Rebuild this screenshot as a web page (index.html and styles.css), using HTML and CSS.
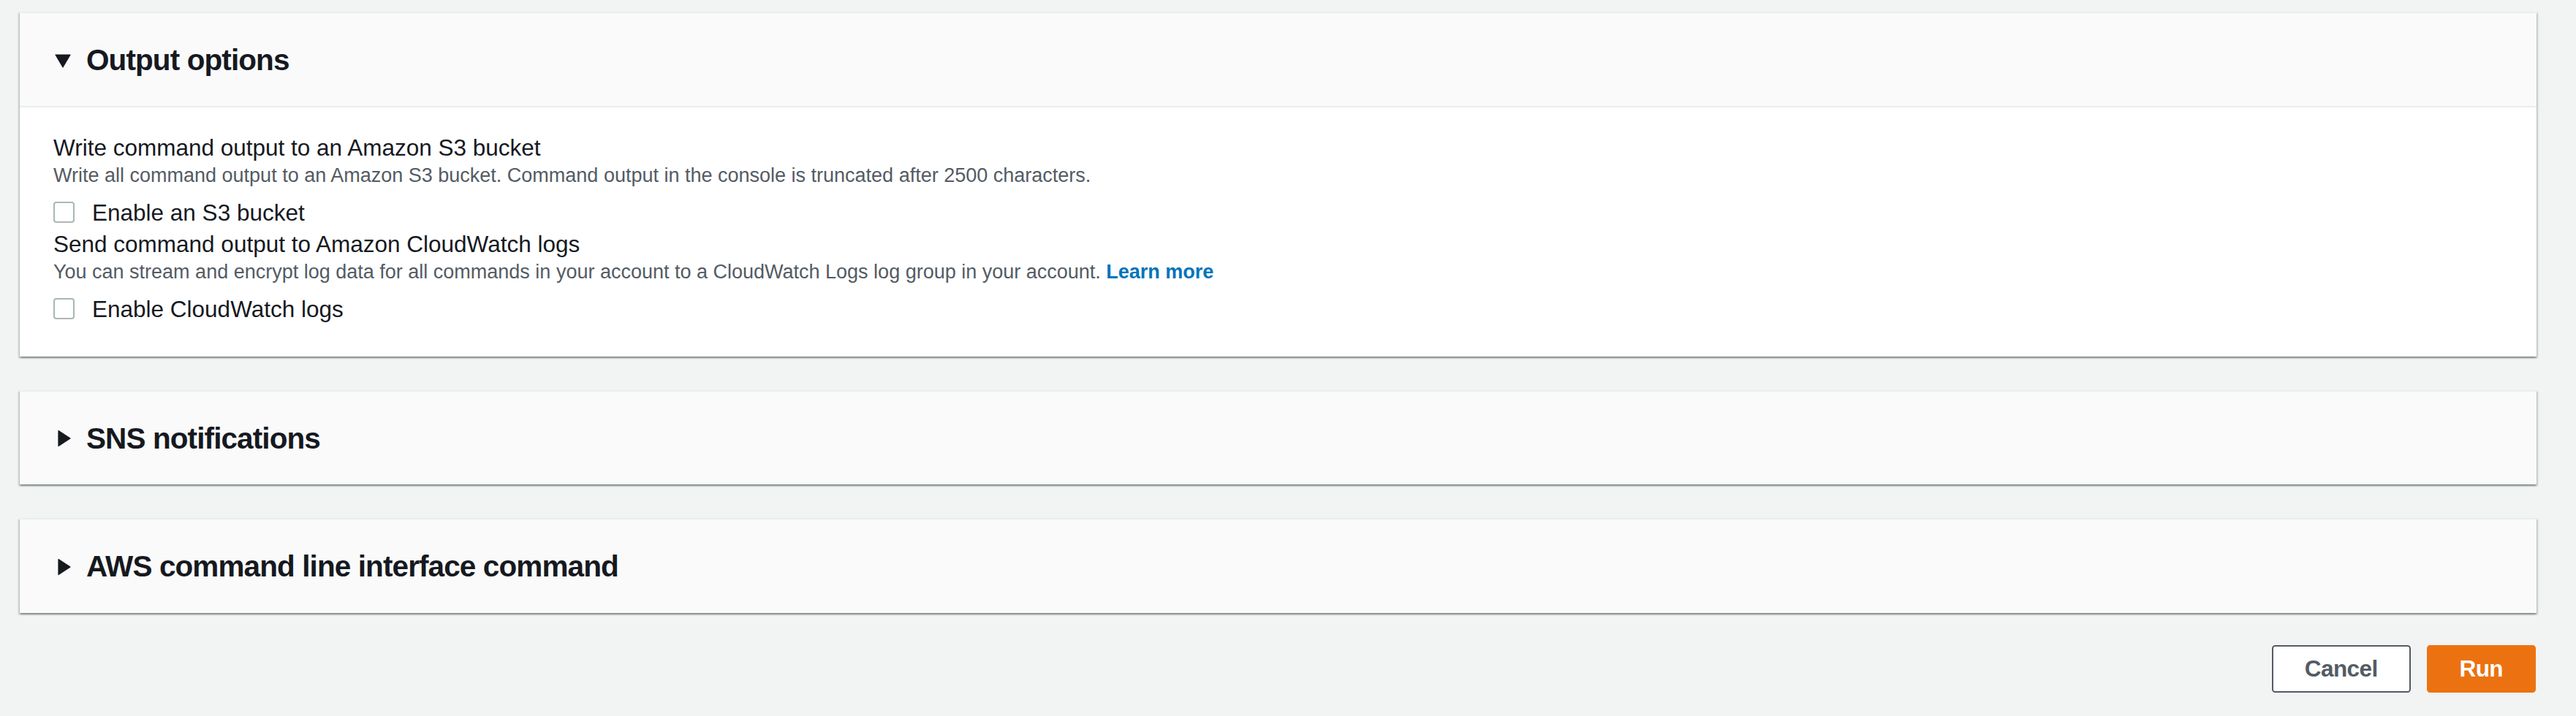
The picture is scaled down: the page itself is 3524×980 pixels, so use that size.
FILE: index.html
```html
<!DOCTYPE html>
<html lang="en">
<head>
<meta charset="utf-8">
<title>Run command - options</title>
<link rel="stylesheet" href="styles.css">
</head>
<body>
<div class="page">
  <section class="card">
    <div class="card-header expanded">
      <svg class="caret" viewBox="0 0 24 24" width="24" height="24" aria-hidden="true"><path d="M2 4 L22 4 L12 21 Z" fill="#16191f" stroke="#16191f" stroke-width="1.2" stroke-linejoin="round"/></svg>
      <h2 class="card-title">Output options</h2>
    </div>
    <div class="card-body">
      <div class="field-label">Write command output to an Amazon S3 bucket</div>
      <div class="field-desc">Write all command output to an Amazon S3 bucket. Command output in the console is truncated after 2500 characters.</div>
      <label class="checkbox-row"><span class="checkbox"></span><span>Enable an S3 bucket</span></label>
      <div class="field-label">Send command output to Amazon CloudWatch logs</div>
      <div class="field-desc">You can stream and encrypt log data for all commands in your account to a CloudWatch Logs log group in your account. <a class="link" href="#">Learn more</a></div>
      <label class="checkbox-row"><span class="checkbox"></span><span>Enable CloudWatch logs</span></label>
    </div>
  </section>

  <section class="card">
    <div class="card-header">
      <svg class="caret" viewBox="0 0 24 24" width="24" height="24" aria-hidden="true"><path d="M6 1.5 L22 12 L6 22.5 Z" fill="#16191f" stroke="#16191f" stroke-width="1.2" stroke-linejoin="round"/></svg>
      <h2 class="card-title">SNS notifications</h2>
    </div>
  </section>

  <section class="card">
    <div class="card-header">
      <svg class="caret" viewBox="0 0 24 24" width="24" height="24" aria-hidden="true"><path d="M6 1.5 L22 12 L6 22.5 Z" fill="#16191f" stroke="#16191f" stroke-width="1.2" stroke-linejoin="round"/></svg>
      <h2 class="card-title">AWS command line interface command</h2>
    </div>
  </section>

  <div class="actions">
    <button class="btn btn-normal" type="button">Cancel</button>
    <button class="btn btn-primary" type="button">Run</button>
  </div>
</div>
</body>
</html>
```

FILE: styles.css
```css
* { box-sizing: border-box; }

body {
  margin: 0;
  background: #f2f3f3;
  font-family: "Liberation Sans", Arial, sans-serif;
  color: #16191f;
}

.page {
  padding: 16px 54px 40px 27px;
}

.card {
  background: #ffffff;
  border-top: 2px solid #eaeded;
  box-shadow: 0 2px 2px 0 rgba(0, 28, 36, 0.3),
              2px 2px 2px 0 rgba(0, 28, 36, 0.15),
              -2px 2px 2px 0 rgba(0, 28, 36, 0.15);
}

.card + .card {
  margin-top: 46px;
}

.card-header {
  display: flex;
  align-items: center;
  padding: 40px 46px 38px 47px;
  background: #fafafa;
}

.card-header.expanded {
  padding-bottom: 37px;
  border-bottom: 2px solid #eaeded;
}

.caret {
  flex: none;
  display: block;
  margin-right: 20px;
}

.card-title {
  margin: 0;
  font-size: 40.5px;
  line-height: 49.5px;
  font-weight: 700;
  letter-spacing: -0.9px;
  color: #16191f;
}

.card-body {
  padding: 34px 46px 43px 46px;
}

.field-label {
  font-size: 31.5px;
  line-height: 42px;
  color: #16191f;
}

.field-desc {
  font-size: 27px;
  line-height: 35px;
  color: #545b64;
}

.link {
  color: #0073bb;
  font-weight: 700;
  text-decoration: none;
}

.checkbox-row {
  display: flex;
  align-items: center;
  gap: 24px;
  margin-top: 11px;
  height: 44px;
  font-size: 31.5px;
  line-height: 44px;
  color: #16191f;
}

.checkbox {
  flex: none;
  width: 29px;
  height: 29px;
  border: 2px solid #aab7b8;
  border-radius: 4px;
  background: #ffffff;
}

.actions {
  display: flex;
  justify-content: flex-end;
  gap: 22px;
  margin-top: 44px;
  padding-right: 1px;
}

.btn {
  height: 65px;
  padding: 0 43px;
  border-radius: 4.5px;
  font-family: "Liberation Sans", Arial, sans-serif;
  font-size: 31.5px;
  font-weight: 700;
  letter-spacing: -0.6px;
  cursor: pointer;
}

.btn-normal {
  background: #ffffff;
  border: 2px solid #545b64;
  color: #545b64;
}

.btn-primary {
  background: #ec7211;
  border: 2px solid #ec7211;
  color: #ffffff;
}
```
